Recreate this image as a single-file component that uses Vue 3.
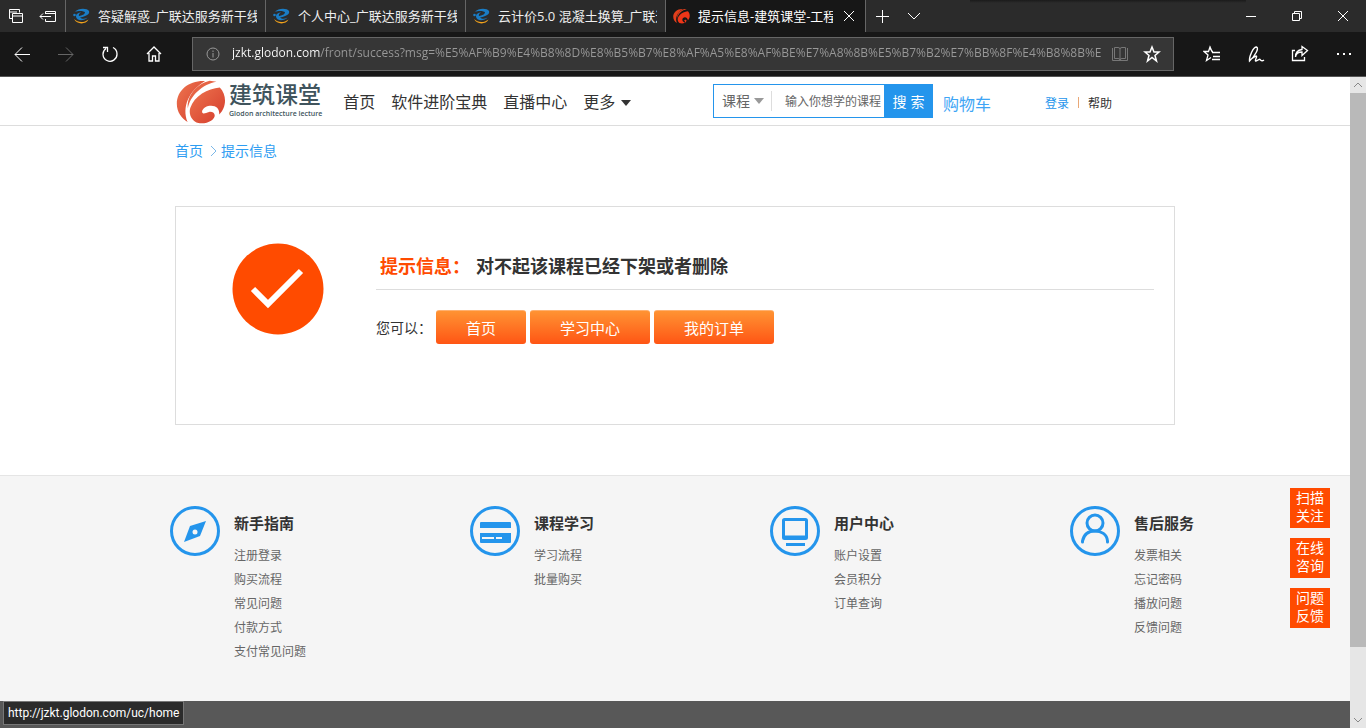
<script setup>
import { ref } from 'vue'

const tabs = [
  { title: '答疑解惑_广联达服务新干线', kind: 'blue' },
  { title: '个人中心_广联达服务新干线', kind: 'blue' },
  { title: '云计价5.0 混凝土换算_广联达', kind: 'blue' },
  { title: '提示信息-建筑课堂-工程', kind: 'red' }
]
const address = ref('jzkt.glodon.com/front/success?msg=%E5%AF%B9%E4%B8%8D%E8%B5%B7%E8%AF%A5%E8%AF%BE%E7%A8%8B%E5%B7%B2%E7%BB%8F%E4%B8%8B%E6%9E%B6')
const navItems = ['首页', '软件进阶宝典', '直播中心']
const actions = ['首页', '学习中心', '我的订单']
const keyword = ref('')
const columns = [
  { icon: 'compass', title: '新手指南', links: ['注册登录', '购买流程', '常见问题', '付款方式', '支付常见问题'] },
  { icon: 'card', title: '课程学习', links: ['学习流程', '批量购买'] },
  { icon: 'screen', title: '用户中心', links: ['账户设置', '会员积分', '订单查询'] },
  { icon: 'person', title: '售后服务', links: ['发票相关', '忘记密码', '播放问题', '反馈问题'] }
]
const floats = [['扫描', '关注'], ['在线', '咨询'], ['问题', '反馈']]
</script>

<template>
  <div class="window">
    <div class="titlebar">
      <div class="tab-tools">
        <button aria-label="标签页集"><svg width="16" height="16" viewBox="0 0 16 16"><path d="M4.500 10.500H1.500V1.500H11.500V4.500M1.500 4H9M4.500 5.500H14.500V14.500H4.500ZM4.500 8H14.500" /></svg></button>
        <button aria-label="搁置标签页"><svg width="18" height="16" viewBox="0 0 18 16"><path d="M6.500 6V3.500H16.500V13.500H6.500V11M6.500 5.500H16.500M1 8.500H12M4 5.500L1 8.500L4 11.500" /></svg></button>
      </div>
      <div v-for="(tab, i) in tabs" :key="i" class="tab" :class="{ active: tab.kind === 'red' }">
        <svg v-if="tab.kind === 'blue'" class="favicon" viewBox="0 0 17 16">
          <path d="M2 4C5 0 14 0 16 3C17 6 14 8 7 9.500C9 11.500 12 11 14.500 9.500C11 13.500 3 13 3 8.500C3 5.500 6 4.500 8 4.500C6 5.500 5.500 7 6 8C9 7.500 12 6 12 4.500C11 2.500 5 2.500 2 4Z" fill="#1a7cc4" />
          <circle cx="1.500" cy="7" r="1.300" fill="#1a7cc4" />
          <path d="M1 11C5 15 11 15 15.500 11.500C13 16.500 4 17 1 11Z" fill="#f3a31c" />
        </svg>
        <svg v-else class="favicon" viewBox="18 10 148 134">
          <path d="M104 16C55 14 20 44 20 84C20 108 34 128 52 138C34 94 56 45 104 16Z" fill="#e23f1c" />
          <path d="M138 18C98 24 58 60 55 98C48 58 80 24 118 15Z" fill="#e23f1c" />
          <path d="M148 35C112 38 72 60 60 96C54 116 66 136 84 141C98 144 112 140 122 134C98 126 94 106 106 94C122 82 144 90 148 114C170 92 168 54 148 35Z" fill="#ef3618" />
          <path d="M122 136C132 130 138 122 134 112C128 106 116 110 116 117C118 122 126 124 122 136Z" fill="#ef3618" />
        </svg>
        <span class="tab-title">{{ tab.title }}</span>
        <button v-if="tab.kind === 'red'" class="tab-close" aria-label="关闭标签页"><svg width="12" height="12" viewBox="0 0 12 12"><path d="M1 1L11 11M11 1L1 11" /></svg></button>
      </div>
      <div class="new-tab">
        <button aria-label="新建标签页"><svg width="14" height="14" viewBox="0 0 14 14"><path d="M7.500 1V14M1 7.500H14" /></svg></button>
        <button aria-label="显示标签页预览"><svg width="14" height="14" viewBox="0 0 14 14"><path d="M1 4L7 10L13 4" /></svg></button>
      </div>
      <div class="window-buttons">
        <button aria-label="最小化"><svg width="12" height="12" viewBox="0 0 12 12"><path d="M1 6.500H11" /></svg></button>
        <button aria-label="还原"><svg width="12" height="12" viewBox="0 0 12 12"><path d="M1.500 3.500H8.500V10.500H1.500ZM3.500 3.500V1.500H10.500V8.500H8.500" /></svg></button>
        <button aria-label="关闭"><svg width="12" height="12" viewBox="0 0 12 12"><path d="M1 1L11 11M11 1L1 11" /></svg></button>
      </div>
    </div>

    <div class="toolbar">
      <button aria-label="后退"><svg width="18" height="18" viewBox="0 0 18 18"><path d="M17 9.500H2M9 2.500L2 9.500L9 16.500" /></svg></button>
      <button aria-label="前进" class="dim" disabled><svg width="18" height="18" viewBox="0 0 18 18"><path d="M1 9.500H16M9 2.500L16 9.500L9 16.500" /></svg></button>
      <button aria-label="刷新"><svg width="18" height="18" viewBox="0 0 18 18"><path d="M12 2.500C15 4 16 7 16 9A7 7 0 1 1 5 3.500M2 2.500H6.500V7" stroke-width="1.300" /></svg></button>
      <button aria-label="主页"><svg width="18" height="18" viewBox="0 0 18 18"><path d="M2 9L9 2L16 9M4 8V16H7.500V11H10.500V16H14V8" stroke-width="1.300" /></svg></button>
      <div class="address">
        <svg class="info" width="14" height="14" viewBox="0 0 14 14"><circle cx="7" cy="7" r="6" /><path d="M7 6V10.500M7 3.500V5" /></svg>
        <input v-model="address" aria-label="地址栏" spellcheck="false">
        <button class="book" aria-label="阅读视图"><svg width="18" height="16" viewBox="0 0 18 16"><path d="M1.500 2V14.500H16.500V2M3.500 1.500H7Q9 1.500 9 3Q9 1.500 11 1.500H14.500V12.500H11Q9 12.500 9 14Q9 12.500 7 12.500H3.500ZM9 3V14" /></svg></button>
        <button aria-label="添加到收藏夹"><svg width="18" height="18" viewBox="0 0 18 18"><path d="M9 2L11 7H16L12 10.500L13.500 16L9 12.500L4.500 16L6 10.500L2 7H7Z" stroke-width="1.500" /></svg></button>
      </div>
      <button aria-label="收藏夹"><svg width="18" height="18" viewBox="0 0 18 18"><path d="M10 6.500H9L7 2L5.500 6.500H1L5 10L3.500 15.500L8 12.500M9 7.500H17M10 11.500H17M9 14.500H17M7 2L8 5" stroke-width="1.300" /></svg></button>
      <button aria-label="添加笔记"><svg width="18" height="18" viewBox="0 0 18 18"><path d="M2.500 16C2 12 6 2 9.500 2C12.500 3 8 11 2.500 16ZM5 13.500L9 11C11 11 7 16 9 16C11 16 12 13 13.500 15Q15 16.500 17 15" stroke-width="1.400" /></svg></button>
      <button aria-label="共享"><svg width="18" height="18" viewBox="0 0 18 18"><path d="M4 5.500H1.500V15.500H13.500V12M4.500 12C5 8 8 7 11 7V10.500L16.500 5.500L11 1.500V4.500C7 5 4.500 8 4.500 12Z" stroke-width="1.300" /></svg></button>
      <button aria-label="更多设置"><svg width="18" height="18" viewBox="0 0 18 18"><path d="M2 9H4M8 9H10M14 9H16" stroke-width="2" /></svg></button>
    </div>

    <div class="viewport">
      <main class="page">
        <header class="site-header">
          <div class="container header-row">
            <a class="logo" href="#" aria-label="建筑课堂">
              <svg width="50" height="45" viewBox="18 10 148 134">
                <defs><linearGradient id="swirl" x1="0" y1="0" x2="1" y2="1"><stop offset="0" stop-color="#ee7650" /><stop offset="1" stop-color="#d43b2b" /></linearGradient></defs>
                <path d="M104 16C55 14 20 44 20 84C20 108 34 128 52 138C34 94 56 45 104 16Z" fill="url(#swirl)" />
                <path d="M138 18C98 24 58 60 53 98C48 60 80 24 118 15Z" fill="#e66445" />
                <path d="M148 35C112 38 72 60 60 96C54 116 66 136 84 141C98 144 112 140 122 134C140 122 134 106 116 108C108 110 102 114 98 112C90 108 100 92 118 90C138 88 148 100 146 116C170 94 168 54 148 35Z" fill="url(#swirl)" />
              </svg>
              <span class="logo-text"><strong>建筑课堂</strong><small>Glodon architecture lecture</small></span>
            </a>
            <nav>
              <a v-for="item in navItems" :key="item" href="#">{{ item }}</a>
              <a href="#" class="more">更多<svg width="10" height="6" viewBox="0 0 10 6"><path d="M0 0H10L5 6Z" /></svg></a>
            </nav>
            <form class="search" @submit.prevent>
              <label class="kind"><select aria-label="搜索类型"><option>课程</option></select><svg width="10" height="6" viewBox="0 0 10 6"><path d="M0 0H10L5 6Z" /></svg></label>
              <input v-model="keyword" aria-label="搜索课程" placeholder="输入你想学的课程">
              <button>搜 索</button>
            </form>
            <a class="cart" href="#">购物车</a>
            <div class="account"><a href="#" class="login">登录</a><i></i><a href="#">帮助</a></div>
          </div>
        </header>

        <div class="container body">
          <div class="crumbs">
            <a href="#">首页</a>
            <svg width="7" height="10" viewBox="0 0 7 10"><path d="M1 0L6 5L1 10" /></svg>
            <a href="#">提示信息</a>
          </div>
          <section class="notice">
            <svg class="check" width="92" height="92" viewBox="0 0 92 92"><circle cx="46" cy="46" r="45.500" fill="#ff4b00" /><path d="M21 46L36 61L69 28" fill="none" stroke="#fff" stroke-width="6" /></svg>
            <div class="message">
              <h1><span>提示信息：</span>对不起该课程已经下架或者删除</h1>
              <div class="actions">
                <span>您可以：</span>
                <button v-for="item in actions" :key="item">{{ item }}</button>
              </div>
            </div>
          </section>
        </div>

        <footer>
          <div class="columns">
            <section v-for="col in columns" :key="col.title">
              <svg class="round" width="50" height="50" viewBox="0 0 50 50">
                <circle cx="25" cy="25" r="23.500" />
                <g v-if="col.icon === 'compass'"><path class="solid" d="M36 15L30 30L14 36L20 20Z" /><circle class="hole" cx="25" cy="26" r="2.500" /></g>
                <g v-else-if="col.icon === 'card'"><path class="solid" d="M11 16H40Q41 16 41 17V22H10V17Q10 16 11 16ZM10 27H41V36Q41 37 40 37H11Q10 37 10 36Z" /><path class="slot" d="M12 32H24M26 32H32" /></g>
                <g v-else-if="col.icon === 'screen'"><rect x="13.500" y="13.500" width="23" height="19" rx="1" /><path d="M13 31H37M16 38.500H35" /></g>
                <g v-else><circle cx="25" cy="17" r="8" /><path d="M12.500 36V35C14 28 19 25 25 25C31 25 37 28 37.500 35V36" stroke-linecap="round" /></g>
              </svg>
              <div>
                <h2>{{ col.title }}</h2>
                <ul><li v-for="link in col.links" :key="link"><a href="#">{{ link }}</a></li></ul>
              </div>
            </section>
          </div>
        </footer>
        <div class="copyright"></div>

        <aside class="floats">
          <button v-for="f in floats" :key="f[0]">{{ f[0] }}<br>{{ f[1] }}</button>
        </aside>
        <div class="status">http://jzkt.glodon.com/uc/home</div>
      </main>
      <div class="scrollbar" aria-hidden="true">
        <svg width="16" height="16" viewBox="0 0 16 16"><path d="M4 10L8 6L12 10" /></svg>
        <div class="thumb"></div>
        <div class="rest"></div>
        <svg width="16" height="16" viewBox="0 0 16 16"><path d="M4 6L8 10L12 6" /></svg>
      </div>
    </div>
  </div>
</template>

<style>
body { margin: 0; background: #fff; }
</style>

<style scoped>
* { box-sizing: border-box; }
.window { display: flex; flex-direction: column; min-height: 100vh; font-family: "Liberation Sans", "Noto Sans CJK SC", sans-serif; font-size: 14px; color: #333; }
a { color: inherit; text-decoration: none; }
button { padding: 0; border: 0; background: none; color: inherit; font-family: inherit; }
input, select { font-family: inherit; border: 0; outline: 0; padding: 0; background: none; }
h1, h2, ul { margin: 0; padding: 0; }
ul { list-style: none; }
svg { flex: none; display: block; }

.titlebar, .toolbar { display: flex; color: #fff; font-family: "Open Sans", "Noto Sans CJK SC", sans-serif; }
.titlebar button, .toolbar button { display: flex; align-items: center; justify-content: center; flex: none; }
.titlebar button path, .toolbar path, .toolbar circle { fill: none; stroke: currentColor; }
.titlebar { position: relative; height: 32px; background: #2b2b2b; }
.titlebar::after { content: ""; position: absolute; top: 0; right: 120px; width: 276px; height: 3px; background: linear-gradient(#1b1b1b, #2b2b2b); }
.tab-tools { display: flex; width: 65px; flex: none; }
.tab-tools button { width: 32px; }
.tab { display: flex; align-items: center; flex: 0 1 200px; min-width: 0; padding: 0 8px 0 7px; border-left: 1px solid #666; font-size: 13px; color: #eee; }
.tab.active { background: #171717; color: #fff; }
.favicon { width: 17px; height: 16px; margin-right: 8px; }
.tab-title { flex: 1; min-width: 0; overflow: hidden; white-space: nowrap; line-height: 20px; padding-bottom: 1px; }
.tab-close { width: 24px; height: 24px; margin-left: 4px; margin-right: -4px; }
.new-tab { display: flex; border-left: 1px solid #666; }
.new-tab button { width: 32px; }
.window-buttons { display: flex; margin-left: auto; }
.window-buttons button { width: 46px; }

.toolbar { height: 45px; background: #171717; border-bottom: 1px solid #555; align-items: center; }
.toolbar > button { width: 44px; height: 44px; }
.toolbar .dim { color: #666; }
.address { display: flex; align-items: center; flex: 1; min-width: 0; height: 34px; margin: 0 16px; padding-left: 13px; padding-right: 5px; background: #363636; border: 1px solid #666; }
.address .info { color: #999; margin-right: 12px; }
.address input { flex: 1; min-width: 0; height: 28px; padding-bottom: 4px; margin-right: 2px; font-size: 12px; font-family: "Open Sans", sans-serif; color: transparent; background-image: linear-gradient(90deg, #fff 88px, #999 88px); background-clip: text; }
.address button { width: 32px; height: 32px; }
.address .book { color: #777; }

.viewport { display: flex; flex: 1; }
.page { position: relative; flex: 1; min-width: 0; display: flex; flex-direction: column; background: #fff; }
.container { width: 100%; max-width: 1000px; margin: 0 auto; }
.site-header { border-bottom: 1px solid #ddd; }
.header-row { display: flex; align-items: center; height: 48px; padding-right: 63px; white-space: nowrap; }
.logo { display: flex; align-items: center; margin-left: 1px; gap: 3px; color: #40545d; }
.logo-text { display: flex; flex-direction: column; }
.logo-text strong { font-size: 23px; font-weight: 500; line-height: 26px; }
.logo-text small { font-family: "Open Sans", sans-serif; font-size: 7px; font-weight: 600; line-height: 12px; }
nav { display: flex; gap: 16px; margin-left: 21px; font-size: 16px; line-height: 24px; padding-top: 4px; }
.more { display: flex; align-items: center; gap: 6px; }
.more path { fill: #333; }
.search { display: flex; align-items: center; height: 34px; margin-left: auto; border: 1px solid #2495ec; }
.kind { display: flex; align-items: center; gap: 4px; height: 20px; padding: 0 7px 0 8px; border-right: 1px solid #ddd; }
.kind select { appearance: none; width: 28px; font-size: 14px; color: #666; }
.kind path { fill: #999; }
.search input { width: 112px; height: 32px; padding-left: 13px; padding-top: 2px; font-size: 12px; color: #333; }
.search input::placeholder { color: #666; }
.search button { width: 49px; height: 34px; margin-right: -1px; background: #2495ec; color: #fff; font-size: 14px; }
.cart { margin-left: 10px; font-size: 16px; color: #3ea5f5; padding-top: 4px; }
.account { display: flex; align-items: center; margin-left: 54px; gap: 9px; font-size: 12px; padding-top: 2px; }
.account i { width: 1px; height: 11px; background: #e9a877; }
.login { color: #2495ec; }

.body { padding-bottom: 50px; }
.crumbs { display: flex; align-items: center; height: 50px; margin-bottom: 30px; color: #2e9df2; font-size: 14px; line-height: 20px; }
.crumbs svg { margin: 0 4px 0 7px; }
.crumbs path { fill: none; stroke: #7cb8e8; }
.notice { display: flex; min-height: 219px; padding: 36px 20px 36px 56px; border: 1px solid #ddd; }
.message { flex: 1; min-width: 0; margin-left: 52px; }
h1 { padding: 11px 4px 9px; border-bottom: 1px solid #ddd; font-size: 18px; line-height: 26px; }
h1 span { display: inline-block; margin-right: 6px; color: #ff4b00; }
.actions { display: flex; align-items: center; gap: 4px; margin-top: 20px; }
.actions button { height: 34px; padding: 0 30px; border-top: 1px solid #ffb070; border-radius: 3px; background: linear-gradient(#ff9333, #ff5514); color: #fff; font-size: 15px; }

footer { flex: 1; padding: 30px 0; background: #f5f5f5; border-top: 1px solid #e5e5e5; }
.columns { display: grid; grid-template-columns: repeat(4, 1fr); max-width: 1200px; margin: 0 auto; }
.columns section { display: flex; gap: 14px; padding-left: 95px; }
.round circle, .round path, .round rect { fill: none; stroke: #2495ec; stroke-width: 3; }
.round .solid { fill: #2495ec; stroke: none; }
.round .hole { fill: #f5f5f5; stroke: none; }
.round .slot { stroke: #f5f5f5; stroke-width: 2; }
h2 { margin: 6px 0 8px; font-size: 15px; line-height: 24px; }
li { font-size: 12px; line-height: 24px; color: #666; }
.copyright { height: 27px; background: #585858; }
.floats { position: absolute; right: 20px; bottom: 100px; display: flex; flex-direction: column; gap: 10px; }
.floats button { width: 40px; height: 40px; padding-bottom: 2px; background: #ff4b00; color: #fff; font-size: 14px; line-height: 18px; }
.status { position: absolute; left: 3px; bottom: 3px; height: 24px; padding: 0 4px; border: 1px solid #777; background: #2b2b2b; color: #fff; font-family: Roboto, sans-serif; font-size: 12px; line-height: 22px; }

.scrollbar { display: flex; flex-direction: column; width: 16px; background: #e6e6e6; }
.scrollbar path { fill: none; stroke: #888; stroke-width: 1; }
.thumb { flex: 17; background: #b9b9b9; }
.rest { flex: 2; }
</style>
